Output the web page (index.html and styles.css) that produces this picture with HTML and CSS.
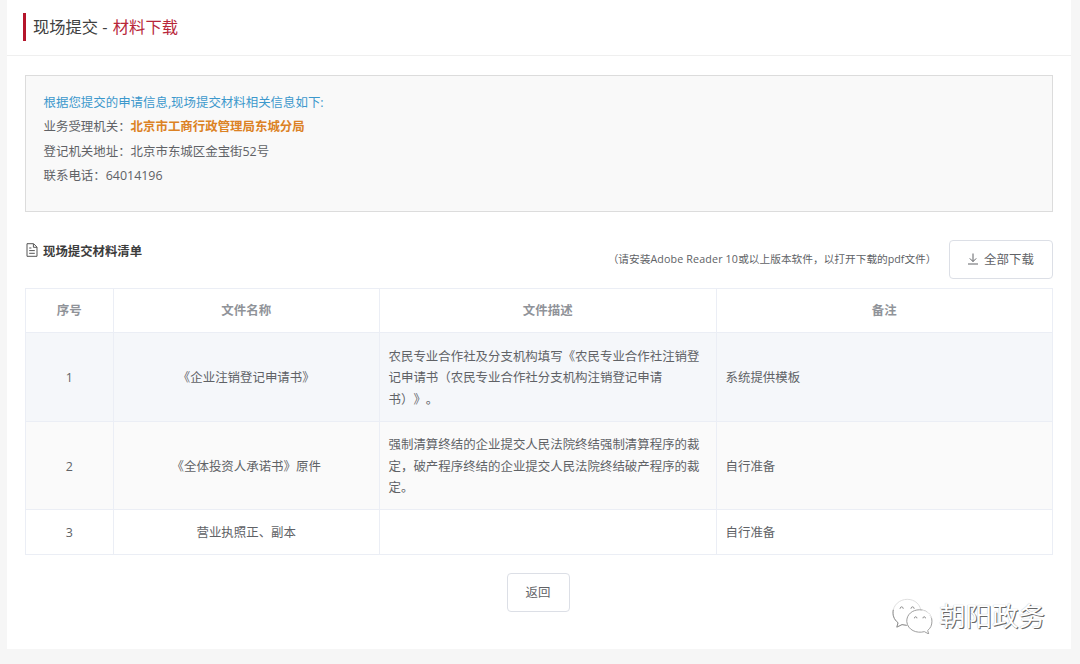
FILE: index.html
```html
<!DOCTYPE html>
<html lang="zh-CN">
<head>
<meta charset="utf-8">
<title>现场提交 - 材料下载</title>
<link rel="stylesheet" href="styles.css">
</head>
<body>
<main class="card">
  <header class="card-header">
    <h1 class="title">现场提交 - <span class="title-accent">材料下载</span></h1>
  </header>
  <section class="info">
    <p class="info-lead">根据您提交的申请信息,现场提交材料相关信息如下:</p>
    <p>业务受理机关：<strong class="agency">北京市工商行政管理局东城分局</strong></p>
    <p>登记机关地址：北京市东城区金宝街52号</p>
    <p>联系电话：<span class="phone">64014196</span></p>
  </section>
  <div class="toolbar">
    <h2 class="list-title">
      <svg class="doc-icon" viewBox="0 0 12 14" fill="none" stroke="currentColor"><path d="M1 .7h6.6L11 4.1v9.2H1zM7.4.9v3.4H11M3.2 5h2.2M3.2 7.6h5.6M3.2 10.3h5.6"/></svg>
      <span class="list-text">现场提交材料清单</span>
    </h2>
    <div class="actions">
      <span class="note">（请安装<span class="latin">Adobe Reader 10</span>或以上版本软件，以打开下载的pdf文件）</span>
      <button class="btn btn-download"><svg class="down-icon" viewBox="0 0 12 12" fill="none" stroke="currentColor"><path d="M6 .5v8M2.8 5.4 6 8.6l3.2-3.2M1 11h10"/></svg>全部下载</button>
    </div>
  </div>
  <table class="files">
    <colgroup><col class="c-no"><col class="c-name"><col class="c-desc"><col class="c-note"></colgroup>
    <thead>
      <tr><th>序号</th><th>文件名称</th><th>文件描述</th><th>备注</th></tr>
    </thead>
    <tbody>
      <tr class="row-hover"><td class="center">1</td><td class="center">《企业注销登记申请书》</td><td>农民专业合作社及分支机构填写《农民专业合作社注销登<br>记申请书（农民专业合作社分支机构注销登记申请<br>书）》。</td><td>系统提供模板</td></tr>
      <tr class="row-stripe"><td class="center">2</td><td class="center">《全体投资人承诺书》原件</td><td>强制清算终结的企业提交人民法院终结强制清算程序的裁<br>定，破产程序终结的企业提交人民法院终结破产程序的裁<br>定。</td><td>自行准备</td></tr>
      <tr class="row-last"><td class="center">3</td><td class="center">营业执照正、副本</td><td></td><td>自行准备</td></tr>
    </tbody>
  </table>
  <footer class="footer"><button class="btn">返回</button></footer>
  <div class="watermark">
    <svg class="wechat" viewBox="0 0 44 40" fill="#fff" stroke-width="1">
      <path stroke="#ddd" d="M7.300 28.200 6 32.800l5.500-2.700c2 .7 4 .9 6 .8C24 31 31.500 25 31.500 17.500 31.500 9 25 3.500 17 3.500S2 9.500 2 17.500c0 4.500 2 8 5.300 10.700z"/>
      <path stroke="#888" fill="none" d="M2.300 14.500c-1 5.500.5 10 5 13.700L6 32.800l5.500-2.700 5 .8"/>
      <path stroke="#888" fill="none" d="M9.500 13.500v-.6c.4-2 2.800-2 3.200 0v.6M21 13.500v-.6c.4-2 2.800-2 3.200 0v.6"/>
      <path stroke="#999" d="M38.500 36.300 39.600 40l-4.600-2.500c-8 2.200-17.500-1.500-18.500-10.500-.4-7.500 6-12.500 13.300-12.500S43 19.500 43 26.500c0 4.200-1.500 7.500-4.500 9.800z"/>
      <path stroke="#fff" fill="none" d="M33 15.200c5 1.300 8 4 9.500 7.500"/>
      <path stroke="#888" fill="none" d="M24.500 23.500v-.4c.4-1.700 2.300-1.700 2.700 0v.4M33.500 23.500v-.4c.4-1.700 2.300-1.700 2.700 0v.4"/>
    </svg>
    <span>朝阳政务</span>
  </div>
</main>
</body>
</html>
```
FILE: styles.css
```css
* { box-sizing: border-box; }

body {
  margin: 0;
  height: 664px;
  overflow: hidden;
  background: #f6f6f6;
  color: #606266;
  font: 12.44px/21.5px "Open Sans", "Noto Sans CJK SC", sans-serif;
  text-spacing-trim: space-all;
}

h1, h2, p { margin: 0; }

.card {
  position: relative;
  width: 1064px;
  height: 649px;
  margin-left: 7px;
  background: #fff;
}

.card-header {
  height: 56px;
  padding: 13px 16px 0;
  border-bottom: 1px solid #efefef;
}

.title {
  height: 28px;
  padding-left: 7px;
  border-left: 3px solid #b5152b;
  color: #404040;
  font-size: 16.300px;
  font-weight: 400;
  line-height: 28px;
}

.title-accent { margin-left: 1px; color: #b8263a; }

.info {
  width: 1028px;
  height: 137px;
  margin: 19px 0 0 18px;
  padding: 15px 17.500px;
  border: 1px solid #dcdcdc;
  background: #f9f9f9;
  line-height: 24.300px;
}

.info-lead { color: #3c98cc; }
.agency { color: #dc8224; font-weight: 700; }

.toolbar {
  display: flex;
  justify-content: space-between;
  width: 1028px;
  height: 76px;
  margin-left: 18px;
  padding-top: 28px;
}

.list-title {
  display: flex;
  gap: 6px;
  height: 24px;
  padding-left: 1px;
  color: #3c3c3c;
  font-size: 12.400px;
  font-weight: 700;
}

.doc-icon { width: 12px; height: 14px; margin-top: 3px; color: #555; }
.list-text { line-height: 23px; margin-left: -1px; }

.actions { display: flex; height: 39px; }

.note {
  margin-right: 12.500px;
  font-size: 10.700px;
  line-height: 38px;
  white-space: nowrap;
}

.latin { letter-spacing: .15px; }

.btn {
  width: 63px;
  height: 39px;
  padding: 0;
  border: 1px solid #dcdfe6;
  border-radius: 4px;
  background: #fff;
  color: #606266;
  font: inherit;
}

.btn-download {
  display: flex;
  align-items: center;
  justify-content: center;
  gap: 5px;
  width: 104px;
  padding-right: 1px;
}

.down-icon { width: 12px; height: 12px; margin-top: -2px; }

.files {
  width: 1028px;
  margin-left: 18px;
  table-layout: fixed;
  border: 0 solid #ebeef5;
  border-width: 1px 0 0 1px;
  border-spacing: 0;
}

.c-no { width: 88px; }
.c-name { width: 266px; }
.c-desc { width: 337px; }
.c-note { width: 336px; }

.files th, .files td {
  padding: 2px 9px 0 8.500px;
  border: 0 solid #ebeef5;
  border-width: 0 1px 1px 0;
  text-align: left;
  white-space: nowrap;
}

.files th {
  height: 44px;
  padding-top: 1px;
  color: #909399;
  font-weight: 700;
  text-align: center;
}

.files .center { text-align: center; }
.row-hover { height: 89px; background: #f5f7fa; }
.row-stripe { height: 88px; background: #fafafa; }
.row-last { height: 45px; }

.footer {
  display: flex;
  justify-content: center;
  padding: 18px 2px 0 0;
}

.footer .btn { padding-top: 1px; }

.watermark {
  position: absolute;
  right: 26px;
  bottom: 13px;
  display: flex;
  align-items: center;
  gap: 5px;
  color: #fff;
  font-size: 26.500px;
  font-weight: 400;
  line-height: 40px;
  text-shadow: 1px 1px 0 #666, 0 0 1px #aaa;
}

.wechat { width: 44px; height: 38px; margin-top: -3px; }
```
